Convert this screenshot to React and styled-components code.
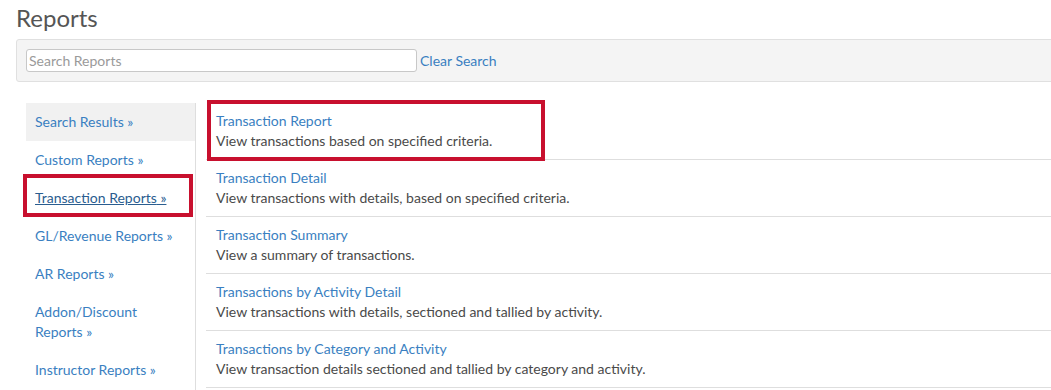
import React from 'react'
import styled, { createGlobalStyle, css } from 'styled-components'

const GlobalStyle = createGlobalStyle`
    html, body {
        margin: 0;
        padding: 0;
        background: #fff;
        overflow: hidden;
    }
    body {
        font-family: Lato, 'Open Sans', Arial, sans-serif;
        font-size: 14px;
        color: #444;
    }
`

const categories = [
    { label: 'Search Results', shaded: true },
    { label: 'Custom Reports' },
    { label: 'Transaction Reports', active: true },
    { label: 'GL/Revenue Reports' },
    { label: 'AR Reports' },
    { label: 'Addon/Discount Reports' },
    { label: 'Instructor Reports' },
]

const reports = [
    { title: 'Transaction Report', desc: 'View transactions based on specified criteria.', marked: true },
    { title: 'Transaction Detail', desc: 'View transactions with details, based on specified criteria.' },
    { title: 'Transaction Summary', desc: 'View a summary of transactions.' },
    { title: 'Transactions by Activity Detail', desc: 'View transactions with details, sectioned and tallied by activity.' },
    { title: 'Transactions by Category and Activity', desc: 'View transaction details sectioned and tallied by category and activity.' },
]

const App = () => {
    return (
        <Page>
            <GlobalStyle />
            <Heading>Reports</Heading>

            <SearchPanel>
                <SearchInput type="text" placeholder="Search Reports" />
                <ClearLink href="#">Clear Search</ClearLink>
            </SearchPanel>

            <Body>
                <Sidebar>
                    {categories.map(c => (
                        <SideItem key={c.label} shaded={c.shaded} marked={c.active}>
                            <SideLink href="#" active={c.active}>{c.label} »</SideLink>
                        </SideItem>
                    ))}
                </Sidebar>

                <ReportList>
                    {reports.map(r => (
                        <ReportRow key={r.title} marked={r.marked}>
                            <TextLink href="#">{r.title}</TextLink>
                            <Desc>{r.desc}</Desc>
                        </ReportRow>
                    ))}
                </ReportList>
            </Body>
        </Page>
    )
}

export default App

const redBox = css`
    &::after {
        content: '';
        position: absolute;
        border: 4px solid #c8102e;
        pointer-events: none;
    }
`

const Page = styled.div`
    padding: 0 0 0 16px;
    width: 1080px;
`

const Heading = styled.h1`
    margin: 4px 0 0;
    font-size: 24px;
    font-weight: 400;
    line-height: 1.2;
    color: #555;
`

const SearchPanel = styled.div`
    margin-top: 6px;
    display: flex;
    align-items: center;
    gap: 3px;
    padding: 9px;
    background: #f4f4f4;
    border: 1px solid #e0e0e0;
    border-radius: 3px;
`

const SearchInput = styled.input`
    box-sizing: border-box;
    width: 391px;
    height: 23px;
    padding: 0 2px;
    border: 1px solid #c8c8c8;
    border-radius: 3px;
    background: #fff;
    font-family: inherit;
    font-size: 14px;
    color: #444;

    &::placeholder {
        color: #9a9a9a;
    }
`

const TextLink = styled.a`
    display: block;
    color: #3a7fc1;
    text-decoration: none;
    font-size: 14px;
    line-height: 20px;
`

const ClearLink = styled(TextLink)`
    padding-top: 2px;
`

const Body = styled.div`
    margin-top: 21px;
    padding-left: 10px;
    display: flex;
    align-items: flex-start;
`

const Sidebar = styled.ul`
    list-style: none;
    margin: 0;
    padding: 0;
    width: 169px;
    min-height: 300px;
    border-right: 1px solid #dedede;
    flex-shrink: 0;
`

const SideItem = styled.li`
    position: relative;
    padding: 9px 12px 9px 9px;
    line-height: 20px;
    background: ${p => (p.shaded ? '#f1f1f1' : 'transparent')};

    ${p => p.marked && css`
        ${redBox}
        &::after {
            left: -3px;
            right: 2px;
            top: -5px;
            bottom: 0;
        }
    `}
`

const SideLink = styled.a`
    display: inline-block;
    color: ${p => (p.active ? '#2a5d8f' : '#3a7fc1')};
    text-decoration: ${p => (p.active ? 'underline' : 'none')};
    line-height: 20px;
`

const ReportList = styled.div`
    flex: 1;
    margin-left: 10px;
`

const ReportRow = styled.div`
    position: relative;
    padding: 8px 10px;
    border-bottom: 1px solid #dedede;

    ${p => p.marked && css`
        ${redBox}
        &::after {
            left: 1px;
            top: -3px;
            width: 330px;
            bottom: -2px;
        }
    `}
`

const Desc = styled.div`
    line-height: 20px;
    color: #4a4a4a;
`
